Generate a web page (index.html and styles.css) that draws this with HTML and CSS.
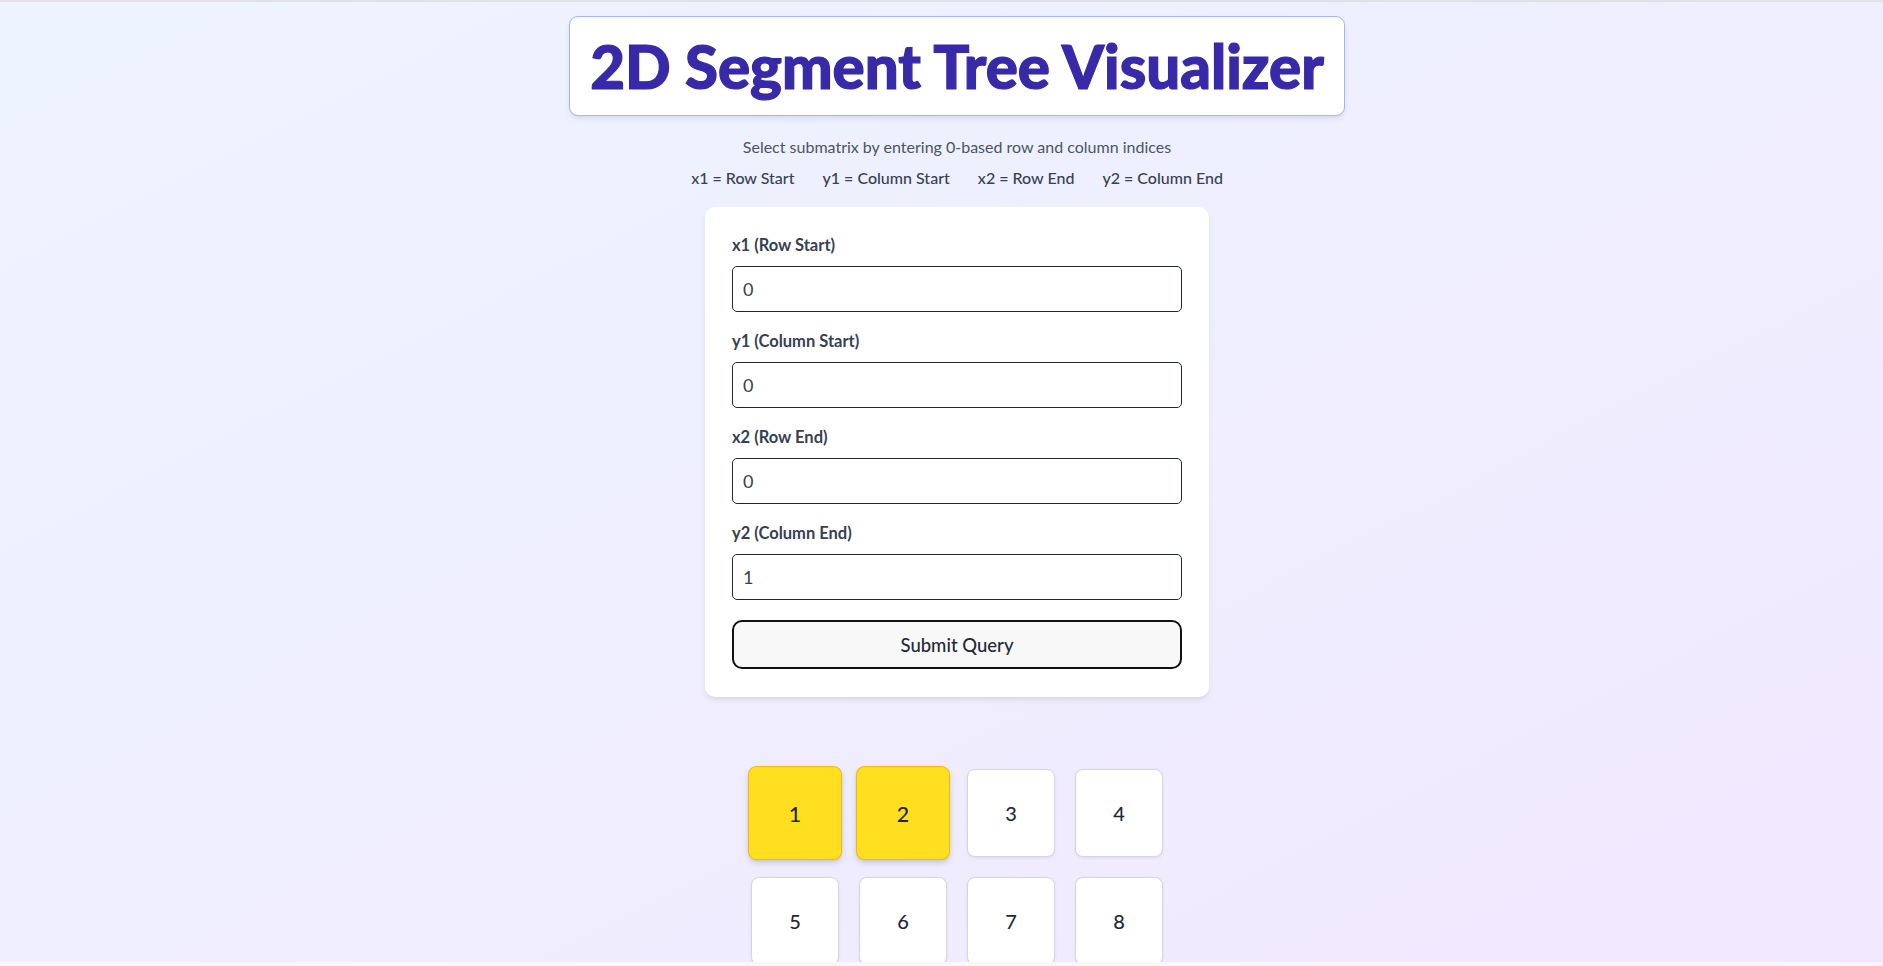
FILE: index.html
```html
<!DOCTYPE html>
<html lang="en">
<head>
<meta charset="utf-8">
<title>2D Segment Tree Visualizer</title>
<link rel="stylesheet" href="styles.css">
</head>
<body>
<div class="page">
  <header class="header">
    <h1 class="title-card">2D Segment Tree Visualizer</h1>
    <p class="subtitle">Select submatrix by entering 0-based row and column indices</p>
    <div class="legend">
      <span>x1 = Row Start</span>
      <span>y1 = Column Start</span>
      <span>x2 = Row End</span>
      <span>y2 = Column End</span>
    </div>
  </header>

  <form class="query-card">
    <div class="field">
      <label class="field-label" for="x1">x1 (Row Start)</label>
      <input class="field-input" id="x1" type="text" value="0">
    </div>
    <div class="field">
      <label class="field-label" for="y1">y1 (Column Start)</label>
      <input class="field-input" id="y1" type="text" value="0">
    </div>
    <div class="field">
      <label class="field-label" for="x2">x2 (Row End)</label>
      <input class="field-input" id="x2" type="text" value="0">
    </div>
    <div class="field">
      <label class="field-label" for="y2">y2 (Column End)</label>
      <input class="field-input" id="y2" type="text" value="1">
    </div>
    <button class="submit-btn" type="button">Submit Query</button>
  </form>

  <div class="matrix">
    <div class="cell cell-active">1</div>
    <div class="cell cell-active">2</div>
    <div class="cell">3</div>
    <div class="cell">4</div>
    <div class="cell">5</div>
    <div class="cell">6</div>
    <div class="cell">7</div>
    <div class="cell">8</div>
    <div class="cell">9</div>
    <div class="cell">10</div>
    <div class="cell">11</div>
    <div class="cell">12</div>
    <div class="cell">13</div>
    <div class="cell">14</div>
    <div class="cell">15</div>
    <div class="cell">16</div>
  </div>
</div>
<div class="bottom-strip"></div>
</body>
</html>
```

FILE: styles.css
```css
* {
  box-sizing: border-box;
}

html, body {
  margin: 0;
  padding: 0;
}

body {
  min-height: 100vh;
  border-top: 2px solid #e1e1e8;
  background: linear-gradient(to bottom right, #edf4ff 0%, #efeefe 50%, #f1e8ff 100%);
  background-attachment: fixed;
  font-family: "Lato", "Noto Sans", sans-serif;
  color: #374151;
}

.page {
  display: flex;
  flex-direction: column;
  align-items: center;
  padding: 14px 0 40px 31px;
}

.header {
  display: flex;
  flex-direction: column;
  align-items: center;
}

.title-card {
  margin: 0;
  padding: 19px 20px;
  background: #ffffff;
  border: 1px solid #a8b3fb;
  border-radius: 9px;
  box-shadow: 0 3px 6px -1px rgba(79, 70, 229, 0.12), 0 2px 4px -2px rgba(0, 0, 0, 0.08);
  font-family: "Lato", sans-serif;
  font-weight: 900;
  font-size: 60px;
  line-height: 60px;
  color: #3829a8;
  -webkit-text-stroke: 1.2px #3829a8;
  white-space: nowrap;
}

.subtitle {
  margin: 19px 0 0;
  font-size: 16px;
  line-height: 24px;
  color: #4b5563;
}

.legend {
  display: flex;
  gap: 28px;
  margin-top: 7px;
  font-size: 16px;
  line-height: 24px;
  font-weight: 500;
  color: #374151;
}

.query-card {
  width: 504px;
  margin-top: 17px;
  padding: 27px 27px 28px;
  background: #ffffff;
  border-radius: 10px;
  box-shadow: 0 4px 6px -1px rgba(0, 0, 0, 0.08), 0 2px 4px -2px rgba(0, 0, 0, 0.06);
  display: flex;
  flex-direction: column;
  gap: 18px;
}

.field {
  display: flex;
  flex-direction: column;
  gap: 10px;
}

.field-label {
  font-size: 16.5px;
  line-height: 22px;
  font-weight: 700;
  color: #374151;
}

.field-input {
  width: 100%;
  height: 46px;
  padding: 0 10px;
  border: 1px solid #1f2937;
  border-radius: 5px;
  background: #ffffff;
  font-family: "Lato", "Noto Sans", sans-serif;
  font-size: 18px;
  color: #374151;
  outline: none;
}

.submit-btn {
  margin-top: 2px;
  height: 49px;
  width: 100%;
  border: 2px solid #111111;
  border-radius: 10px;
  background: #f8f8f8;
  font-family: "Lato", "Noto Sans", sans-serif;
  font-size: 18.5px;
  font-weight: 500;
  color: #1f2937;
  cursor: pointer;
}

.matrix {
  margin-top: 72px;
  display: grid;
  grid-template-columns: repeat(4, 88px);
  grid-auto-rows: 88px;
  gap: 20px;
}

.cell {
  display: flex;
  align-items: center;
  justify-content: center;
  background: #ffffff;
  border: 1px solid #d4d6e0;
  border-radius: 8px;
  box-shadow: 0 1px 3px rgba(0, 0, 0, 0.08);
  font-size: 20px;
  font-weight: 500;
  color: #1f2937;
}

.cell-active {
  background: #ffdf20;
  border-color: #f0b81a;
  transform: scale(1.07);
  box-shadow: 0 3px 6px -1px rgba(0, 0, 0, 0.12), 0 2px 4px -2px rgba(0, 0, 0, 0.08);
}

.bottom-strip {
  position: fixed;
  left: 0;
  right: 0;
  bottom: 0;
  height: 4px;
  background: #f8f8f8;
}
```
